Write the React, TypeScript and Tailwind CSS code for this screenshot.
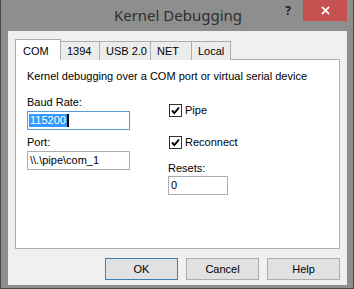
import React from "react";

const tabs = [
  { label: "COM", w: "w-[46px]" },
  { label: "1394", w: "w-[40px]" },
  { label: "USB 2.0", w: "w-[52px]" },
  { label: "NET", w: "w-[42px]" },
  { label: "Local", w: "w-[40px]" },
];

const CheckBox = ({ label }: { label: string }) => (
  <div className="flex items-center gap-[3px]">
    <div className="flex h-[13px] w-[13px] items-center justify-center border border-[#333333] bg-white">
      <svg viewBox="0 0 11 11" className="h-[11px] w-[11px]" aria-hidden>
        <path d="M2 5.5 L4.3 8 L9 2.6" fill="none" stroke="#000" strokeWidth="1.9" />
      </svg>
    </div>
    <span className="leading-[13px]">{label}</span>
  </div>
);

const Button = ({ label, primary }: { label: string; primary?: boolean }) => (
  <button
    type="button"
    className={
      primary
        ? "flex h-[22px] w-[73px] items-center justify-center border border-[#3c7fb1] bg-[#e1e1e1] text-[11px] text-black"
        : "flex h-[22px] w-[73px] items-center justify-center border border-[#adadad] bg-[#e1e1e1] text-[11px] text-black"
    }
  >
    {label}
  </button>
);

export default function App() {
  return (
    <div className="flex h-[289px] w-[354px] flex-col border-x border-b border-[#4a4a4a] bg-[#8e8e8e] font-['Liberation_Sans',Arial,sans-serif] text-[11px] text-black">
      {/* Title bar */}
      <div className="flex h-[31px] items-start">
        <div className="flex h-[31px] flex-1 items-center justify-center pl-[74px] font-['Noto_Sans',sans-serif] text-[15px] text-[#2e2e2e]">
          Kernel Debugging
        </div>
        <div className="flex h-[21px] w-[14px] items-center justify-center pt-[1px] font-['Noto_Sans',sans-serif] text-[12px] font-bold text-[#222]">
          ?
        </div>
        <div className="ml-[8px] flex h-[21px] w-[44px] items-center justify-center bg-[#c75050]">
          <svg viewBox="0 0 10 10" className="h-[9px] w-[9px]" aria-hidden>
            <path d="M1 1 L9 9 M9 1 L1 9" stroke="#fff" strokeWidth="1.8" />
          </svg>
        </div>
        <div className="w-[6px]" />
      </div>

      {/* Client area */}
      <div className="ml-[7px] mr-[6px] flex h-[254px] flex-col bg-[#f0f0f0] px-[7px] pt-[8px]">
        {/* Tabs */}
        <div className="relative z-10 flex h-[21px] items-end">
          {tabs.map((t, i) =>
            i === 0 ? (
              <div
                key={t.label}
                className={`${t.w} flex h-[21px] items-start border-x border-t border-[#adadad] bg-white pl-[7px] pt-[3px]`}
              >
                {t.label}
              </div>
            ) : (
              <div
                key={t.label}
                className={`${t.w} -ml-px flex h-[19px] items-center border-x border-t border-[#adadad] bg-[#ececec] pl-[6px]`}
              >
                {t.label}
              </div>
            )
          )}
        </div>

        {/* Tab panel */}
        <div className="-mt-px flex h-[190px] flex-col border border-[#adadad] bg-white px-[11px] pt-[9px]">
          <div className="leading-[14px]">Kernel debugging over a COM port or virtual serial device</div>
          <div className="flex">
            <div className="flex w-[103px] flex-col">
              <div className="mt-[12px] leading-[14px]">Baud Rate:</div>
              <div className="mt-[2px] flex h-[19px] items-center border border-[#5a9bd5] bg-white pl-[1px]">
                <span className="bg-[#3399ff] px-[1px] leading-[13px] text-white">115200</span>
                <span className="h-[13px] w-[2px] bg-black" />
              </div>
              <div className="mt-[5px] leading-[14px]">Port:</div>
              <div className="mt-[2px] flex h-[19px] items-center border border-[#abadb3] bg-white pl-[2px]">
                {"\\\\.\\pipe\\com_1"}
              </div>
            </div>
            <div className="ml-[38px] flex flex-col">
              <div className="ml-[1px] mt-[21px]">
                <CheckBox label="Pipe" />
              </div>
              <div className="ml-[1px] mt-[19px]">
                <CheckBox label="Reconnect" />
              </div>
              <div className="mt-[12px] leading-[14px]">Resets:</div>
              <div className="mt-[1px] flex h-[19px] w-[60px] items-center border border-[#abadb3] bg-white pl-[2px]">
                0
              </div>
            </div>
          </div>
        </div>

        {/* Buttons */}
        <div className="mt-[9px] flex justify-end gap-[8px]">
          <Button label="OK" primary />
          <Button label="Cancel" />
          <Button label="Help" />
        </div>
      </div>
    </div>
  );
}
